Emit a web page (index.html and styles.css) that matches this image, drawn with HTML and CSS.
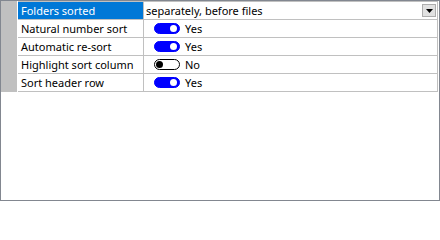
FILE: index.html
```html
<!DOCTYPE html>
<html>
<head>
<meta charset="utf-8">
<link rel="stylesheet" href="styles.css">
</head>
<body>
<div class="frame">
  <div class="grid">
    <div class="strip"></div>
    <div class="table">
      <div class="row">
        <div class="label selected">Folders sorted</div>
        <div class="value">
          <span class="text">separately, before files</span>
          <span class="dropbtn"><svg width="7" height="4" viewBox="0 0 7 4"><polygon points="0,0 7,0 3.5,4" fill="#000"/></svg></span>
        </div>
      </div>
      <div class="row">
        <div class="label">Natural number sort</div>
        <div class="value toggled"><span class="toggle on"><span class="knob"></span></span><span class="text">Yes</span></div>
      </div>
      <div class="row">
        <div class="label">Automatic re-sort</div>
        <div class="value toggled"><span class="toggle on"><span class="knob"></span></span><span class="text">Yes</span></div>
      </div>
      <div class="row">
        <div class="label">Highlight sort column</div>
        <div class="value toggled"><span class="toggle off"><span class="knob"></span></span><span class="text">No</span></div>
      </div>
      <div class="row">
        <div class="label">Sort header row</div>
        <div class="value toggled"><span class="toggle on"><span class="knob"></span></span><span class="text">Yes</span></div>
      </div>
    </div>
  </div>
</div>
</body>
</html>
```

FILE: styles.css
```css
html, body {
  margin: 0;
  padding: 0;
  background: #ffffff;
}
.frame {
  box-sizing: border-box;
  width: 440px;
  height: 201px;
  border: 1px solid #828790;
  background: #ffffff;
  font-family: "Noto Sans", "Open Sans", sans-serif;
  font-size: 11px;
  color: #000000;
}
.grid {
  display: flex;
  align-items: stretch;
}
.strip {
  width: 16px;
  background: #c0c0c0;
  margin-right: 1px;
}
.table {
  flex: 1;
  margin-right: 1px;
  border-top: 1px solid #c0c0c0;
  border-right: 1px solid #c0c0c0;
}
.row {
  display: flex;
  height: 17px;
  border-bottom: 1px solid #c0c0c0;
}
.label {
  width: 126px;
  border-right: 1px solid #c0c0c0;
  padding-left: 3px;
  box-sizing: border-box;
  line-height: 17px;
  white-space: nowrap;
}
.label.selected {
  background: #0078d7;
  color: #ffffff;
}
.value {
  flex: 1;
  display: flex;
  align-items: center;
  padding-left: 2px;
  padding-right: 1px;
  line-height: 17px;
  white-space: nowrap;
}
.value.toggled {
  padding-left: 10px;
}
.dropbtn {
  margin-left: auto;
  width: 14px;
  height: 13px;
  box-sizing: border-box;
  border: 1px solid #adadad;
  background: #e1e1e1;
  display: flex;
  align-items: center;
  justify-content: center;
}
.dropbtn svg {
  display: block;
}
.toggle {
  box-sizing: border-box;
  width: 26px;
  height: 11px;
  border-radius: 6px;
  display: flex;
  align-items: center;
  margin-right: 5px;
}
.toggle.on {
  background: #0000ff;
  border: 1px solid #0000ff;
  justify-content: flex-end;
  padding-right: 2px;
}
.toggle.off {
  background: #ffffff;
  border: 1px solid #000000;
  justify-content: flex-start;
  padding-left: 1px;
}
.knob {
  width: 7px;
  height: 7px;
  border-radius: 50%;
}
.toggle.on .knob {
  background: #ffffff;
}
.toggle.off .knob {
  background: #000000;
}
```
